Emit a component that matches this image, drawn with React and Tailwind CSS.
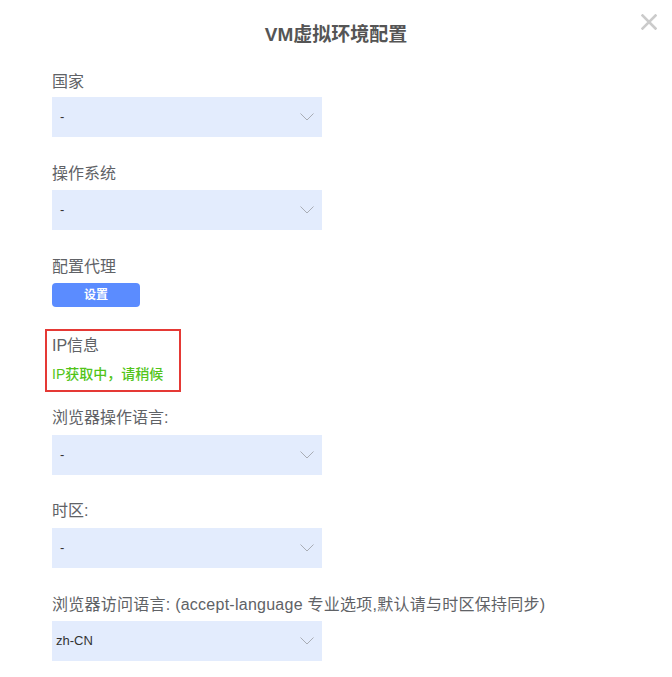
import React from "react";

const font = { fontFamily: '"Liberation Sans", "Noto Sans CJK SC", sans-serif' };

function Chevron() {
  return (
    <svg width="14" height="8" viewBox="0 0 14 8" fill="none" className="shrink-0">
      <path d="M0.5 0.5 L7 7 L13.5 0.5" stroke="#a9adb5" strokeWidth="1" />
    </svg>
  );
}

function Select({ value, dash }) {
  return (
    <div className={`w-[270px] h-10 bg-[#e3ecfd] flex items-center justify-between pr-[8px] ${dash ? "pl-[8px]" : "pl-[4px]"}`}>
      <span className="text-[13px] text-[#333]">{value}</span>
      <Chevron />
    </div>
  );
}

function Label({ children, className = "" }) {
  return <div className={`text-[16px] leading-[22px] text-[#606266] ${className}`}>{children}</div>;
}

export default function App() {
  return (
    <div className="relative w-[672px] h-[677px] bg-white overflow-hidden" style={font}>
      <div className="absolute left-[641px] top-[14px]">
        <svg width="16" height="16" viewBox="0 0 16 16">
          <path d="M1.5 1.5 L14.5 14.5 M14.5 1.5 L1.5 14.5" stroke="#cbcbcb" strokeWidth="2.6" strokeLinecap="square" />
        </svg>
      </div>
      <div className="pt-[21px] text-center text-[19px] leading-[28px] font-bold text-[#555]">VM虚拟环境配置</div>
      <div className="pl-[52px] flex flex-col items-start">
        <Label className="mt-[22px]">国家</Label>
        <div className="mt-[4px]"><Select value="-" dash /></div>

        <Label className="mt-[26px]">操作系统</Label>
        <div className="mt-[5px]"><Select value="-" dash /></div>

        <Label className="mt-[26px]">配置代理</Label>
        <button className="mt-[5px] w-[88px] h-6 rounded-[4px] bg-[#5b8cff] text-white text-[12px] font-bold flex items-center justify-center">设置</button>

        <div className="mt-[22px] -ml-[7px] w-[136px] border-2 border-[#e53935] pl-[5px] pt-[4px] pb-[5px]">
          <div className="text-[16px] leading-[22px] text-[#606266]">IP信息</div>
          <div className="mt-[6px] text-[14px] leading-[22px] text-[#52c41a] font-medium">IP获取中，请稍候</div>
        </div>

        <Label className="mt-[15px]">浏览器操作语言:</Label>
        <div className="mt-[6px]"><Select value="-" dash /></div>

        <Label className="mt-[25px]">时区:</Label>
        <div className="mt-[6px]"><Select value="-" dash /></div>

        <Label className="mt-[26px] tracking-[0.25px]">浏览器访问语言: (accept-language 专业选项,默认请与时区保持同步)</Label>
        <div className="mt-[5px]"><Select value="zh-CN" /></div>
      </div>
    </div>
  );
}
